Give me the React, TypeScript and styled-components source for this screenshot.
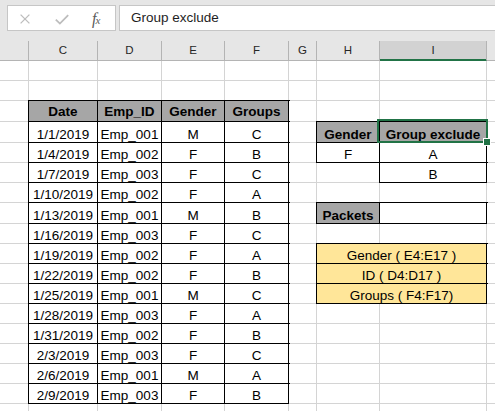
import React from 'react';
import styled, { createGlobalStyle } from 'styled-components';

const GlobalStyle = createGlobalStyle`
  html, body { margin: 0; padding: 0; background: #fff; }
  body { font-family: "Liberation Sans", Arial, sans-serif; }
`;

const COL_WIDTHS = [29, 69, 64, 63, 64, 28, 63, 107, 80];
const COL_KEYS = ['B', 'C', 'D', 'E', 'F', 'G', 'H', 'I', 'J'];
const ROW_HEIGHTS = [20, 20, 21, 21, 20, 20, 20, 21, 20, 20, 20, 20, 20, 20, 20, 20, 20, 20];

const Window = styled.div`
  width: 495px;
  height: 411px;
  overflow: hidden;
  background: #fff;
`;

const FormulaBar = styled.div`
  height: 41px;
  box-sizing: border-box;
  background: #e6e6e6;
  display: flex;
  align-items: flex-start;
  gap: 3px;
  padding: 5px 0 0 7px;
`;

const ActionBox = styled.div`
  flex: none;
  width: 109px;
  height: 26px;
  box-sizing: border-box;
  background: #fff;
  border: 1px solid #c6c6c6;
  display: flex;
  align-items: center;
  padding-left: 12px;
`;

const ActionIcon = styled.svg<{ $gap?: number }>`
  flex: none;
  margin-left: ${p => p.$gap ?? 0}px;
  margin-top: 2px;
`;

const Fx = styled.span`
  margin-left: 23px;
  font-family: "Liberation Serif", "DejaVu Serif", serif;
  font-style: italic;
  color: #5b5b5b;
  font-size: 16px;
  line-height: 1;
  margin-top: 1px;
`;

const FxSub = styled.span`
  font-size: 11px;
  margin-left: -1px;
`;

const FormulaInput = styled.div`
  flex: 1;
  margin-right: -20px;
  height: 26px;
  box-sizing: border-box;
  background: #fff;
  border: 1px solid #c6c6c6;
  padding-left: 11px;
  font-size: 13.5px;
  line-height: 24px;
  color: #1e1e1e;
  white-space: nowrap;
`;

const Sheet = styled.div`
  position: relative;
  display: grid;
  grid-template-columns: ${COL_WIDTHS.map(w => `${w}px`).join(' ')};
  grid-template-rows: 20px ${ROW_HEIGHTS.map(h => `${h}px`).join(' ')};
`;

const ColHead = styled.div<{ $active?: boolean }>`
  background: ${p => (p.$active ? '#d2d2d2' : '#e6e6e6')};
  border-right: 1px solid #b4b4b4;
  border-bottom: 1px solid ${p => (p.$active ? '#217346' : '#b4b4b4')};
  box-shadow: ${p => (p.$active ? 'inset 0 -1px 0 #217346' : 'none')};
  font-size: 11.5px;
  line-height: 19px;
  text-align: center;
  color: #262626;
`;

const Cell = styled.div<{ $bg?: string; $bold?: boolean; $boxed?: boolean; $span?: number; $pb?: number }>`
  grid-column: span ${p => p.$span ?? 1};
  background: ${p => p.$bg ?? '#fff'};
  border-right: 1px solid ${p => (p.$boxed ? '#000' : '#d4d4d4')};
  border-bottom: 1px solid ${p => (p.$boxed ? '#000' : '#d4d4d4')};
  box-shadow: ${p => (p.$boxed ? '0 0 0 1px #000' : 'none')};
  display: flex;
  align-items: flex-end;
  justify-content: center;
  padding-bottom: ${p => p.$pb ?? 1}px;
  font-size: 13.5px;
  line-height: 12px;
  font-weight: ${p => (p.$bold ? 700 : 400)};
  white-space: nowrap;
  color: #000;
  min-width: 0;
`;

const Selection = styled.div`
  position: absolute;
  left: 377px;
  top: 78px;
  width: 111px;
  height: 24px;
  box-sizing: border-box;
  border: 2px solid #217346;
  pointer-events: none;
`;

const FillHandle = styled.div`
  position: absolute;
  left: 483px;
  top: 97px;
  width: 8px;
  height: 8px;
  box-sizing: border-box;
  background: #217346;
  border: 1px solid #fff;
`;

type Spec = { text?: string; bg?: string; bold?: boolean; boxed?: boolean; span?: number; pb?: number; skip?: boolean };

const dates = ['1/1/2019', '1/4/2019', '1/7/2019', '1/10/2019', '1/13/2019', '1/16/2019', '1/19/2019', '1/22/2019', '1/25/2019', '1/28/2019', '1/31/2019', '2/3/2019', '2/6/2019', '2/9/2019'];
const ids = ['Emp_001', 'Emp_002', 'Emp_003', 'Emp_002', 'Emp_001', 'Emp_003', 'Emp_002', 'Emp_002', 'Emp_001', 'Emp_003', 'Emp_002', 'Emp_003', 'Emp_001', 'Emp_003'];
const genders = ['M', 'F', 'F', 'F', 'M', 'F', 'F', 'F', 'M', 'F', 'F', 'F', 'M', 'F'];
const groups = ['C', 'B', 'C', 'A', 'B', 'C', 'A', 'B', 'C', 'A', 'B', 'C', 'A', 'B'];

const HEAD_BG = '#a6a6a6';
const NOTE_BG = '#ffe699';

function specFor(row: number, col: string): Spec {
  const tableCols = ['C', 'D', 'E', 'F'];
  if (tableCols.includes(col) && row >= 3 && row <= 17) {
    if (row === 3) {
      const head = { C: 'Date', D: 'Emp_ID', E: 'Gender', F: 'Groups' } as Record<string, string>;
      return { text: head[col], bold: true, bg: HEAD_BG, boxed: true, pb: 3 };
    }
    const i = row - 4;
    const val = { C: dates[i], D: ids[i], E: genders[i], F: groups[i] } as Record<string, string>;
    return { text: val[col], boxed: true };
  }
  if (row === 4 && col === 'H') return { text: 'Gender', bold: true, bg: HEAD_BG, boxed: true };
  if (row === 4 && col === 'I') return { text: 'Group exclude', bold: true, bg: HEAD_BG, boxed: true };
  if (row === 5 && col === 'H') return { text: 'F', boxed: true };
  if (row === 5 && col === 'I') return { text: 'A', boxed: true };
  if (row === 6 && col === 'I') return { text: 'B', boxed: true };
  if (row === 8 && col === 'H') return { text: 'Packets', bold: true, bg: HEAD_BG, boxed: true };
  if (row === 8 && col === 'I') return { text: '', boxed: true };
  const notes: Record<number, string> = { 10: 'Gender ( E4:E17 )', 11: 'ID ( D4:D17 )', 12: 'Groups ( F4:F17)' };
  if (notes[row]) {
    if (col === 'H') return { text: notes[row], bg: NOTE_BG, boxed: true, span: 2 };
    if (col === 'I') return { skip: true };
  }
  return {};
}

export default function App() {
  const rows = ROW_HEIGHTS.map((_, idx) => idx + 1);
  return (
    <Window>
      <GlobalStyle />
      <FormulaBar>
        <ActionBox>
          <ActionIcon width="10" height="10" viewBox="0 0 10 10">
            <path d="M0.6 0.6 L9.4 9.4 M9.4 0.6 L0.6 9.4" stroke="#bdbdbd" strokeWidth="1.3" fill="none" />
          </ActionIcon>
          <ActionIcon $gap={25} width="14" height="11" viewBox="0 0 14 11">
            <path d="M0.8 5.6 L4.9 9.6 L13.2 1.2" stroke="#bdbdbd" strokeWidth="1.8" fill="none" />
          </ActionIcon>
          <Fx>
            f<FxSub>x</FxSub>
          </Fx>
        </ActionBox>
        <FormulaInput>Group exclude</FormulaInput>
      </FormulaBar>
      <Sheet>
        {COL_KEYS.map(k => (
          <ColHead key={`h-${k}`} $active={k === 'I'}>
            {k === 'B' || k === 'J' ? '' : k}
          </ColHead>
        ))}
        {rows.map(r =>
          COL_KEYS.map(c => {
            const s = specFor(r, c);
            if (s.skip) return null;
            return (
              <Cell key={`${c}${r}`} $bg={s.bg} $bold={s.bold} $boxed={s.boxed} $span={s.span} $pb={s.pb}>
                {s.text}
              </Cell>
            );
          })
        )}
        <Selection />
        <FillHandle />
      </Sheet>
    </Window>
  );
}
